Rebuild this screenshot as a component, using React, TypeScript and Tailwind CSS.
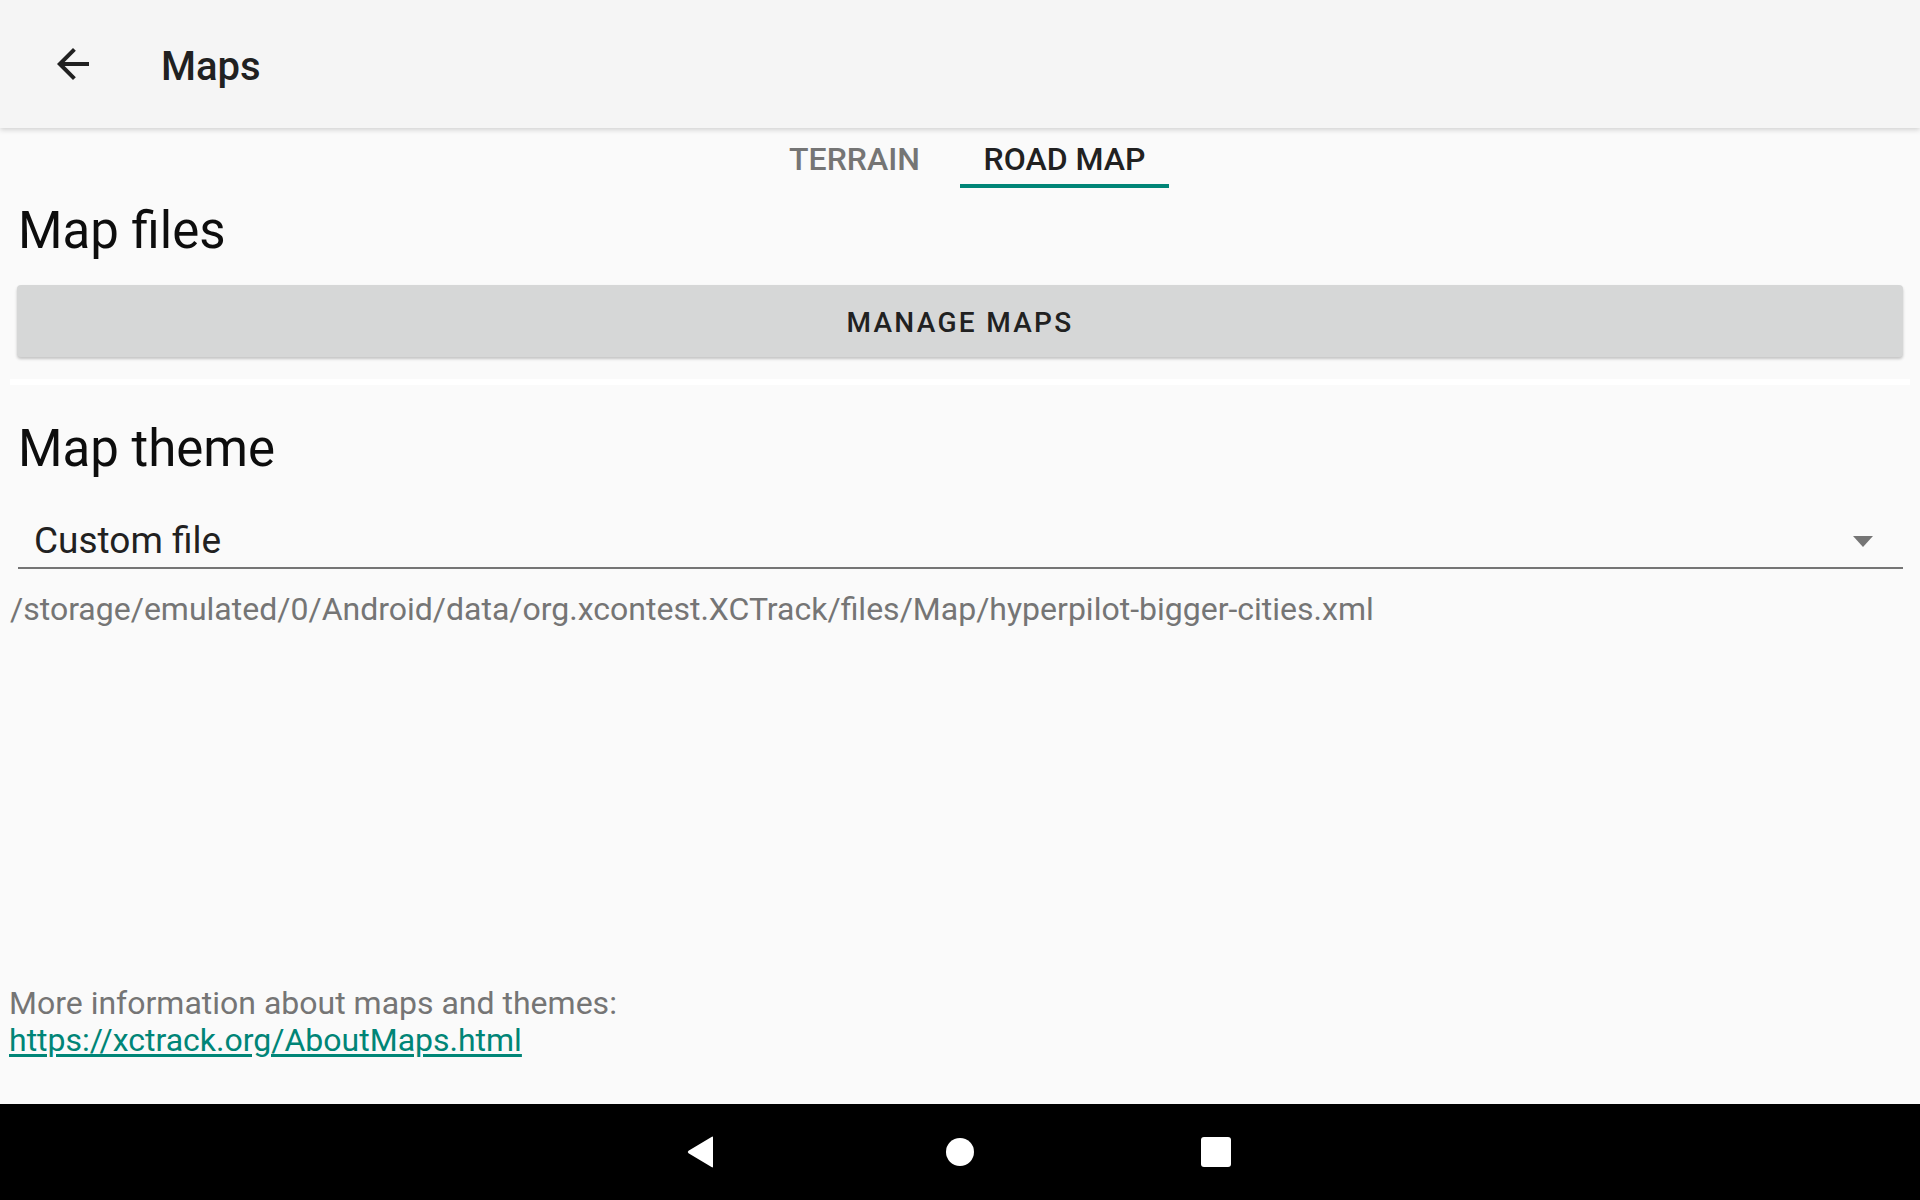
import React from "react";

export default function App() {
  const font = { fontFamily: "Roboto, 'Noto Sans', sans-serif" };
  return (
    <div
      className="w-[1920px] h-[1200px] flex flex-col bg-[#fafafa] overflow-hidden"
      style={font}
    >
      {/* App bar */}
      <div className="relative z-10 h-[128px] shrink-0 bg-[#f5f5f5] shadow-[0_2px_5px_rgba(0,0,0,0.16)] flex">
        <div className="pl-[49px] pt-[40px]">
          <svg width="48" height="48" viewBox="0 0 24 24" fill="#212121">
            <path d="M20 11H7.83l5.59-5.59L12 4l-8 8 8 8 1.41-1.41L7.83 13H20v-2z" />
          </svg>
        </div>
        <div className="pl-[64px] pt-[47px] text-[40px] leading-[40px] font-medium text-[#212121]">
          Maps
        </div>
      </div>

      {/* Main */}
      <div className="flex-1 flex flex-col">
        {/* Tabs */}
        <div className="flex justify-center gap-[17px] pl-[15px] h-[60px]">
          <div className="w-[177px] h-[60px] border-b-4 border-transparent text-center text-[32px] leading-[62px] font-medium text-[#757575]">
            TERRAIN
          </div>
          <div className="w-[209px] h-[60px] border-b-4 border-[#008577] text-center text-[32px] leading-[62px] font-medium text-[#212121]">
            ROAD MAP
          </div>
        </div>

        <div className="mt-[14px] pl-[18px] text-[51px] leading-[58px] text-[#0d0d0d]">
          Map files
        </div>

        <div className="mt-[25px] ml-[17px] mr-[17px] h-[72px] rounded-[4px] bg-[#d6d7d7] shadow-[0_2px_3px_rgba(0,0,0,0.22)] flex items-center justify-center">
          <span className="text-[28px] font-medium tracking-[2.3px] text-[#212121] pt-[4px]">
            MANAGE MAPS
          </span>
        </div>

        <div className="mt-[22px] ml-[10px] mr-[10px] h-[6px] bg-white" />

        <div className="mt-[35px] pl-[18px] text-[51px] leading-[58px] text-[#0d0d0d]">
          Map theme
        </div>

        <div className="mt-[39px] ml-[18px] mr-[17px] border-b-2 border-[#757575] pt-[2px] pb-[4px] flex items-center">
          <div className="flex-1 pl-[16px] text-[37px] leading-[44px] text-[#212121]">
            Custom file
          </div>
          <svg
            width="20"
            height="11"
            viewBox="0 0 20 11"
            className="mr-[30px] mt-[1px]"
          >
            <path d="M0 0h20L10 11z" fill="#757575" />
          </svg>
        </div>

        <div className="mt-[22px] pl-[10px] text-[32px] leading-[37px] text-[#757575]">
          /storage/emulated/0/Android/data/org.xcontest.XCTrack/files/Map/hyperpilot-bigger-cities.xml
        </div>

        <div className="flex-1" />

        <div className="mb-[45px] pl-[9px] text-[32px] leading-[37px]">
          <div className="text-[#757575]">More information about maps and themes:</div>
          <div>
            <a className="text-[#008577] underline underline-offset-[3px]" href="#">
              https://xctrack.org/AboutMaps.html
            </a>
          </div>
        </div>
      </div>

      {/* Navigation bar */}
      <div className="h-[96px] shrink-0 bg-black flex items-center justify-center">
        <div className="w-[256px] flex justify-center">
          <svg width="28" height="32" viewBox="0 0 28 32" className="mr-[6px]">
            <path
              d="M26 1.5 L26 30.5 Q26 32 24.5 31 L1.5 17.2 Q0 16 1.5 14.8 L24.5 1 Q26 0 26 1.5z"
              fill="#fff"
            />
          </svg>
        </div>
        <div className="w-[256px] flex justify-center">
          <div className="w-[28px] h-[28px] rounded-full bg-white" />
        </div>
        <div className="w-[256px] flex justify-center">
          <div className="w-[30px] h-[30px] rounded-[3px] bg-white" />
        </div>
      </div>
    </div>
  );
}
